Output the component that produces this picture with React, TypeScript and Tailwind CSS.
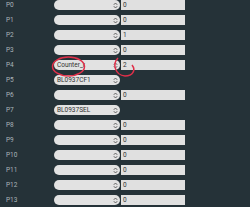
const rows: { label: string; role: string; value?: string }[] = [
  { label: "P0", role: "", value: "0" },
  { label: "P1", role: "", value: "0" },
  { label: "P2", role: "", value: "1" },
  { label: "P3", role: "", value: "0" },
  { label: "P4", role: "Counter_r", value: "2" },
  { label: "P5", role: "BL0937CF1" },
  { label: "P6", role: "", value: "0" },
  { label: "P7", role: "BL0937SEL" },
  { label: "P8", role: "", value: "0" },
  { label: "P9", role: "", value: "0" },
  { label: "P10", role: "", value: "0" },
  { label: "P11", role: "", value: "0" },
  { label: "P12", role: "", value: "0" },
  { label: "P13", role: "", value: "0" },
]

const Arrows = () => (
  <svg width="5" height="7" viewBox="0 0 5 7" className="text-[#555]">
    <path d="M0.8 2.8 L2.5 1 L4.2 2.8 M0.8 4.2 L2.5 6 L4.2 4.2" fill="none" stroke="currentColor" strokeWidth="0.9" />
  </svg>
)

export default function App() {
  return (
    <div className="relative w-[250px] h-[207px] overflow-hidden bg-[#253238] font-['Roboto',sans-serif]">
      <div className="flex flex-col gap-[5px]">
        {rows.map((r) => (
          <div key={r.label} className="flex items-center h-[10px]">
            <span className="w-[54px] pl-[6px] text-[6.5px] leading-none text-[#aab4b9]">{r.label}</span>
            <div className="w-[66px] h-[10px] rounded-full bg-[#e2e2e2] flex items-center justify-between pl-[3px] pr-[2px]">
              <span className="text-[6.5px] leading-none text-[#333]">{r.role}</span>
              <Arrows />
            </div>
            {r.value !== undefined && (
              <div className="w-[65px] h-[10px] bg-[#e0e0e0] flex items-center pl-[2px] border-l border-[#253238]">
                <span className="text-[6.5px] leading-none text-[#333]">{r.value}</span>
              </div>
            )}
          </div>
        ))}
      </div>
      <svg className="absolute left-0 top-0 pointer-events-none" width="250" height="207">
        <ellipse cx="68.5" cy="66.5" rx="16" ry="9.5" fill="none" stroke="#e0304a" strokeWidth="1.5" />
        <path d="M118 58 C112 64 115 75 125 76 C133 76 136 70 132 65" fill="none" stroke="#e0304a" strokeWidth="1.5" />
      </svg>
    </div>
  )
}
